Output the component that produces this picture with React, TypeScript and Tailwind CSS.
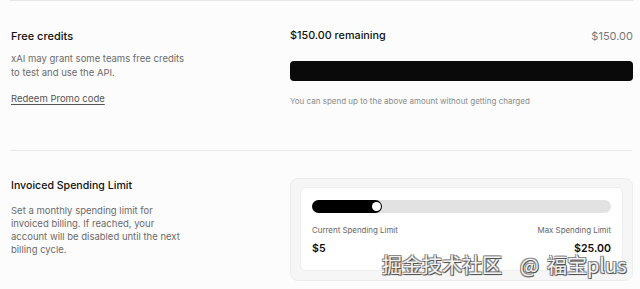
import React from "react";

export default function App() {
  return (
    <div
      className="relative w-[640px] h-[289px] overflow-hidden bg-[#fcfcfc] text-[#111]"
      style={{ fontFamily: "Inter, 'Noto Sans', sans-serif" }}
    >
      <div className="ml-[10px] mr-[7px] h-px bg-[#e6e6e6]" />
      {/* Free credits */}
      <div className="flex pl-[11px] pr-[7px] pt-[27px] h-[149px]">
        <div className="w-[279px] shrink-0">
          <div className="text-[11px] font-medium leading-[16px] text-[#111]">Free credits</div>
          <div className="mt-[8px] whitespace-nowrap text-[9.5px] leading-[14px] text-[#6b6b6b]">
            xAI may grant some teams free credits
            <br />
            to test and use the API.
          </div>
          <div className="mt-[12px] text-[9.5px] leading-[13px] text-[#555] underline underline-offset-2">
            Redeem Promo code
          </div>
        </div>
        <div className="flex-1">
          <div className="flex justify-between items-center h-[16px]">
            <span className="text-[10.8px] font-medium text-[#111]">$150.00 remaining</span>
            <span className="text-[11px] text-[#777]">$150.00</span>
          </div>
          <div className="mt-[17px] h-[20px] rounded-[4px] bg-[#0a0a0a]" />
          <div className="mt-[15px] text-[8px] leading-[11px] text-[#8a8a8a]">
            You can spend up to the above amount without getting charged
          </div>
        </div>
      </div>
      <div className="ml-[10px] mr-[8px] h-px bg-[#ebebeb]" />
      {/* Invoiced spending limit */}
      <div className="flex pl-[11px] pr-[7px] pt-[27px]">
        <div className="w-[279px] shrink-0">
          <div className="text-[10.6px] font-medium leading-[16px] text-[#111]">Invoiced Spending Limit</div>
          <div className="mt-[10px] whitespace-nowrap text-[9.5px] leading-[13px] text-[#6b6b6b]">
            Set a monthly spending limit for
            <br />
            invoiced billing. If reached, your
            <br />
            account will be disabled until the next
            <br />
            billing cycle.
          </div>
        </div>
        <div className="flex-1">
          <div className="rounded-[8px] border border-[#ececec] bg-[#f6f6f6] px-[9px] pt-[8px] pb-[9px]">
            <div className="rounded-[6px] border border-[#eeeeee] bg-white px-[11px] pt-[12px] pb-[14px]">
              <div className="relative h-[13px] rounded-full bg-[#e2e2e2]">
                <div className="absolute left-0 top-0 h-[13px] w-[70px] rounded-full bg-black" />
                <div className="absolute left-[60px] top-[2px] h-[9px] w-[9px] rounded-full bg-white" />
              </div>
              <div className="mt-[12px] flex justify-between text-[7.9px] leading-[11px] text-[#666]">
                <span>Current Spending Limit</span>
                <span>Max Spending Limit</span>
              </div>
              <div className="mt-[6px] flex justify-between text-[10.6px] font-semibold leading-[14px] text-[#111]">
                <span>$5</span>
                <span>$25.00</span>
              </div>
            </div>
          </div>
        </div>
      </div>
      {/* watermark */}
      <div
        className="absolute left-[382px] top-[252px] flex items-center text-[20px] leading-[26px] text-[#f2f2f2] whitespace-nowrap"
        style={{
          fontFamily: "'Noto Sans CJK SC', 'Noto Sans', sans-serif",
          textShadow:
            "1px 1px 0 #555, -1px -1px 0 #8a8a8a, 1px -1px 0 #8a8a8a, -1px 1px 0 #8a8a8a, 0 1px 1px #666",
        }}
      >
        <span>掘金技术社区</span>
        <span className="ml-[18px]">@</span>
        <span className="ml-[8px]">福宝plus</span>
      </div>
    </div>
  );
}
